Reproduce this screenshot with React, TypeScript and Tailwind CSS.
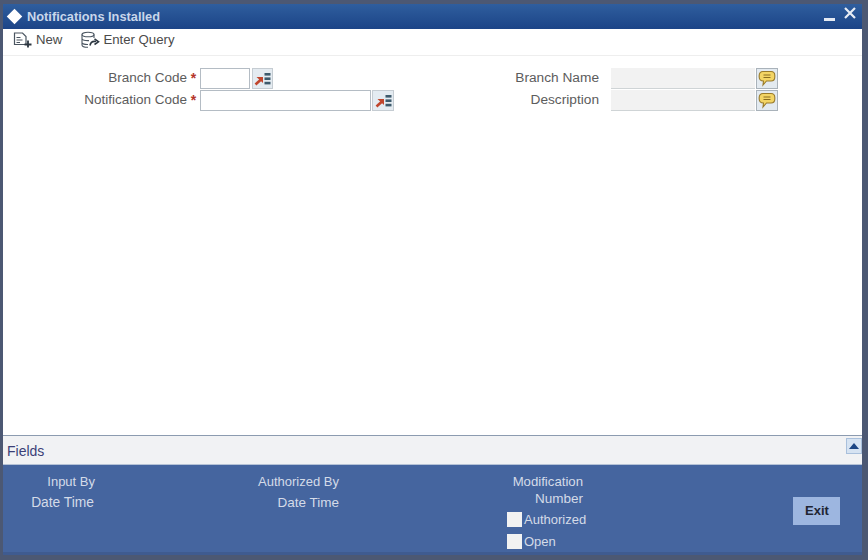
import React from 'react';

const font = { fontFamily: '"Liberation Sans", Arial, sans-serif' };

const LovIcon = () => (
  <svg width="17" height="14" viewBox="0 0 17 14">
    <path d="M1.5 12.5 L7 7.5" stroke="#c0452c" strokeWidth="2.6" fill="none" />
    <path d="M2.5 5 H9 V11 Z" fill="#c0452c" />
    <rect x="10.5" y="1" width="6" height="2.6" fill="#3d5a6c" />
    <rect x="10.5" y="5.4" width="6" height="2.6" fill="#3d5a6c" />
    <rect x="10.5" y="9.8" width="6" height="2.6" fill="#3d5a6c" />
  </svg>
);

const NoteIcon = () => (
  <svg width="18" height="17" viewBox="0 0 18 17">
    <path
      d="M5 1.5 H13 C15.5 1.5 16.8 3.2 16.8 5.5 V7 C16.8 9.3 15.5 11 13 11 H8.5 L5 15 L5.5 11 C2.5 11 1.2 9.3 1.2 7 V5.5 C1.2 3.2 2.5 1.5 5 1.5 Z"
      fill="#f3d565"
      stroke="#9a7b2a"
      strokeWidth="1.1"
    />
    <path d="M5.5 5 H12.5 M5.5 7.5 H12.5" stroke="#8a6d20" strokeWidth="1" />
  </svg>
);

const NewIcon = () => (
  <svg width="22" height="18" viewBox="0 0 22 18" fill="none" stroke="#4a5560" strokeWidth="1.2">
    <path d="M1.5 2 H9.5 L13 5.5 V13.5 H1.5 Z" />
    <path d="M3.5 6.5 H7.5 M3.5 9 H9.5 M3.5 11.5 H7" />
    <path d="M15 9.5 V16.5 M11.5 13.5 H18.5" stroke="#2c3640" strokeWidth="1.8" />
  </svg>
);

const QueryIcon = () => (
  <svg width="20" height="18" viewBox="0 0 20 18" fill="none" stroke="#4a5560" strokeWidth="1.1">
    <ellipse cx="8" cy="3.5" rx="6" ry="2.3" />
    <path d="M2 3.5 V14 C2 15.5 5 16.3 8 16.3 M14 3.5 V7 M2 7.5 C2 9 5 9.8 9 9.6 M2 11.5 C2 13 5 13.6 8 13.5" />
    <path d="M10 14.5 C10.5 11.5 13 10 16 10.5" stroke="#2c3640" strokeWidth="1.6" />
    <path d="M14.5 7.8 L18.5 10.8 L14.5 13.5" stroke="#2c3640" strokeWidth="1.6" />
  </svg>
);

const Required = () => <span className="w-[13px] text-center text-[14px] text-[#b5342c] font-bold">*</span>;

const App: React.FC = () => {
  return (
    <div
      className="w-[868px] h-[560px] bg-[#4c5873] pt-[4px] pl-[3px] pr-[6px] pb-[5px] flex flex-col text-[13.5px] text-[#5c5c5c]"
      style={font}
    >
      {/* title bar */}
      <div className="h-[25px] shrink-0 bg-gradient-to-b from-[#2f5e9e] to-[#1c4487] flex items-center pl-[1px] pr-[5px]">
        <div className="w-[11px] h-[11px] rotate-45 bg-white ml-[5px] mr-[7px]"></div>
        <span className="font-bold text-[12.8px] text-[#c9d6ea]">Notifications Installed</span>
        <div className="ml-auto flex items-center gap-[8px] text-white">
          <div className="w-[11px] h-[3px] bg-[#e4eaf3] mt-[5px]"></div>
          <svg width="14" height="14" viewBox="0 0 14 14" className="-mt-[7px]">
            <path d="M2 2 L12 12 M12 2 L2 12" stroke="#e8edf5" strokeWidth="2.2" />
          </svg>
        </div>
      </div>

      {/* toolbar */}
      <div className="h-[27px] shrink-0 bg-white border-b border-[#eeeeee] flex items-center pl-[10px] pb-[5px] text-[13.2px]">
        <NewIcon />
        <span className="ml-[1px] text-[#4a4a4a]">New</span>
        <div className="ml-[18px]"><QueryIcon /></div>
        <span className="ml-[3px] text-[#4a4a4a]">Enter Query</span>
      </div>

      {/* form */}
      <div className="flex-1 bg-white flex pt-[12px]">
        <div className="w-[197px] flex flex-col items-end gap-[1px]">
          <div className="h-[21px] flex items-center">Branch Code<Required /></div>
          <div className="h-[21px] flex items-center">Notification Code<Required /></div>
        </div>
        <div className="flex flex-col gap-[1px]">
          <div className="h-[21px] flex items-center">
            <div className="w-[50px] h-[21px] bg-white border border-[#b4bcc4]"></div>
            <div className="ml-[2px] w-[21px] h-[21px] bg-[#e4ebf1] border border-[#c5ccd2] flex items-center justify-center"><LovIcon /></div>
          </div>
          <div className="h-[21px] flex items-center">
            <div className="w-[171px] h-[21px] bg-white border border-[#b4bcc4]"></div>
            <div className="ml-[1px] w-[22px] h-[21px] bg-[#e4ebf1] border border-[#c5ccd2] flex items-center justify-center"><LovIcon /></div>
          </div>
        </div>
        <div className="w-[205px] flex flex-col items-end gap-[1px] text-[13.7px]">
          <div className="h-[21px] flex items-center">Branch Name</div>
          <div className="h-[21px] flex items-center">Description</div>
        </div>
        <div className="ml-[12px] flex flex-col gap-[1px]">
          {[0, 1].map((i) => (
            <div key={i} className="h-[21px] flex items-center">
              <div className="w-[144px] h-[21px] bg-[#f2f2f2] border-b border-[#cfd4d6]"></div>
              <div className="ml-[1px] w-[22px] h-[21px] bg-[#e3eaf0] border border-[#a9b2ba] flex items-center justify-center"><NoteIcon /></div>
            </div>
          ))}
        </div>
      </div>

      {/* fields bar */}
      <div className="h-[30px] shrink-0 bg-[#f1f2f4] border-t border-t-[#8c9bb0] border-b border-b-[#b5c2d6] flex items-center pl-[4px] text-[14px]">
        <span className="text-[#3b3f77] mt-[2px]">Fields</span>
        <div className="ml-auto w-[16px] h-[16px] mb-[9px] bg-[#d6e3f2] border border-[#a9c0dc] flex items-center justify-center">
          <div className="w-0 h-0 border-l-[5px] border-r-[5px] border-b-[6px] border-l-transparent border-r-transparent border-b-[#1d4684]"></div>
        </div>
      </div>

      {/* footer */}
      <div className="h-[90px] shrink-0 bg-[#45659f] border-b-[3px] border-[#3f5b90] text-[#d4dbe8] flex pt-[7px] text-[13px]">
        <div className="w-[92px] text-right">
          <div className="h-[20px] leading-[20px]">Input By</div>
          <div className="h-[21px] leading-[21px] text-[13.8px] pr-[1px]">Date Time</div>
        </div>
        <div className="w-[244px] text-right">
          <div className="h-[20px] leading-[20px]">Authorized By</div>
          <div className="h-[21px] leading-[21px] text-[13.5px]">Date Time</div>
        </div>
        <div className="w-[244px]">
          <div className="text-right leading-[17px] pt-[1px] text-[13.2px]">
            <div>Modification</div>
            <div className="text-[13.5px]">Number</div>
          </div>
          <div className="ml-[168px] mt-[5px] w-[90px] flex flex-col gap-[7px]">
            <div className="h-[15px] flex items-center gap-[2px]">
              <div className="w-[15px] h-[15px] bg-[#f2f2f2]"></div>
              <span>Authorized</span>
            </div>
            <div className="h-[15px] flex items-center gap-[2px]">
              <div className="w-[15px] h-[15px] bg-[#f2f2f2]"></div>
              <span>Open</span>
            </div>
          </div>
        </div>
        <div className="ml-[210px] mt-[25px] w-[47px] h-[28px] bg-[#9db6e0] text-[#1f2533] font-bold flex items-center justify-center pl-[1px]">
          Exit
        </div>
      </div>
    </div>
  );
};

export default App;
